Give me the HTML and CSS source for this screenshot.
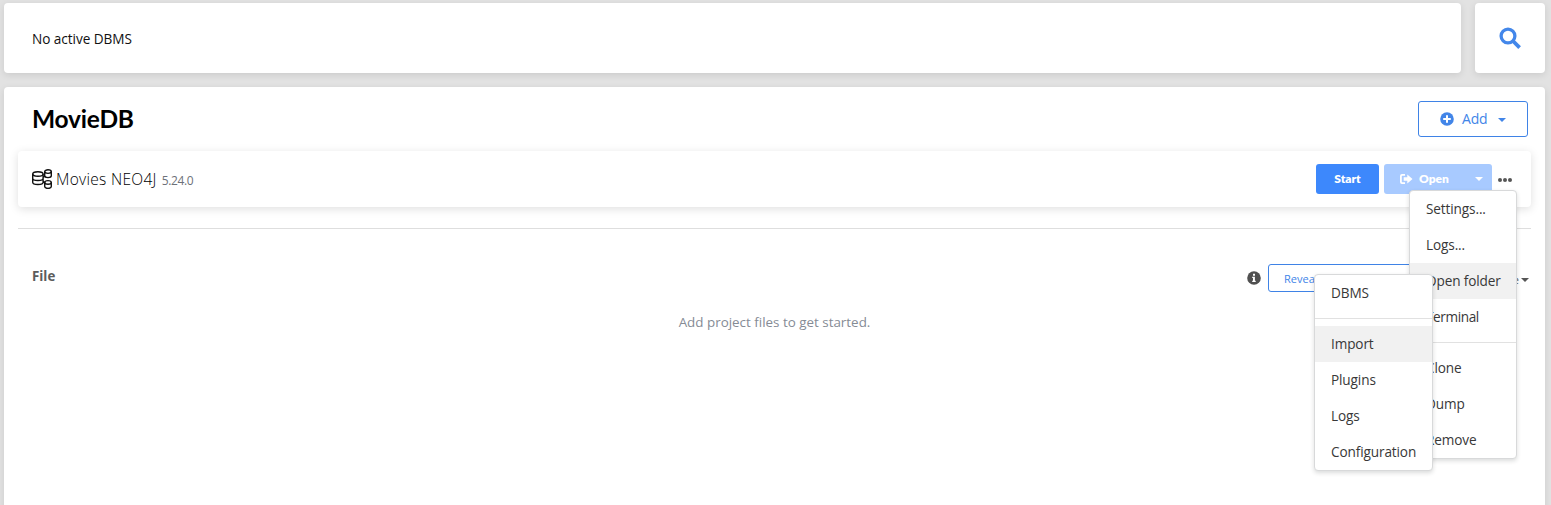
FILE: index.html
```html
<!DOCTYPE html>
<html lang="en">
<head>
<meta charset="utf-8">
<title>MovieDB</title>
<link rel="stylesheet" href="styles.css">
</head>
<body>
<div class="app">
  <header class="topbar">
    <div class="card status"><span class="status-text">No active DBMS</span></div>
    <button class="card search" aria-label="Search">
      <svg width="22" height="22" viewBox="0 0 22 22" fill="none" stroke="#4387ea"><circle cx="9" cy="9" r="6.9" stroke-width="3.3"/><path d="M14 14l6.6 6.6" stroke-width="3.8"/></svg>
    </button>
  </header>
  <main class="card project">
    <div class="project-head">
      <h1 class="title">MovieDB</h1>
      <button class="add">
        <svg width="14" height="14" viewBox="0 0 14 14"><circle cx="7" cy="7" r="6.8" fill="#4285e8"/><path d="M7 3.2v7.6M3.2 7h7.6" stroke="#fff" stroke-width="2"/></svg>
        <span class="add-label">Add</span><i class="caret"></i>
      </button>
    </div>
    <section class="dbms">
      <svg class="db-icon" width="20" height="20" viewBox="0 0 20 20" fill="none" stroke="#111" stroke-width="1.4"><ellipse cx="5.9" cy="5" rx="5.2" ry="2.3"/><path d="M.7 5v8.2c0 3 10.4 3 10.4 0V5M.7 9.2c0 3 10.4 3 10.4 0M11.1 8.5l2-1.5M11.1 12.2l2 1.5"/><ellipse cx="16" cy="2.6" rx="3.3" ry="1.8"/><path d="M12.7 2.6v4.2c0 2.4 6.6 2.4 6.6 0V2.6"/><ellipse cx="16" cy="13.4" rx="3.3" ry="1.8"/><path d="M12.7 13.4v4.2c0 2.4 6.6 2.4 6.6 0v-4.2"/></svg>
      <span class="db-name">Movies NEO4J</span><span class="version">5.24.0</span>
      <button class="start"><span class="start-label">Start</span></button>
      <button class="open">
        <svg width="13" height="10" viewBox="0 0 13 10"><path d="M5 0H2Q0 0 0 2v6q0 2 2 2h3V8.3H2.4Q1.8 8.3 1.8 7.7V2.3q0-.6.6-.6H5z" fill="#fff"/><path d="M3.7 3.3h3.6V.6L12.5 5 7.3 9.4V6.7H3.7z" fill="#fff"/></svg>
        <span class="open-label">Open</span><i class="caret"></i>
      </button>
      <span class="dots"><i></i><i></i><i></i></span>
    </section>
    <section class="files">
      <div class="files-head">
        <h2 class="file-title">File</h2>
        <svg class="info" width="14" height="14" viewBox="0 0 14 14"><circle cx="7" cy="7" r="6.8" fill="#505050"/><path d="M6 2.7h2v2H6zM5.2 5.7h2.7v4h.8V11H5.2V9.7H6V7h-.8z" fill="#fff"/></svg>
        <button class="reveal"><span class="reveal-label">Reveal files</span></button>
        <span class="sort"><span class="sort-label">Name</span><i class="caret"></i></span>
      </div>
      <p class="empty"><span class="empty-label">Add project files to get started.</span></p>
    </section>
  </main>
</div>
<nav class="menu actions">
  <a class="item"><span>Settings...</span></a>
  <a class="item"><span>Logs...</span></a>
  <a class="item active"><span>Open folder</span></a>
  <a class="item"><span class="tight">Terminal</span></a>
  <hr class="divider">
  <a class="item"><span>Clone</span></a>
  <a class="item"><span>Dump</span></a>
  <a class="item"><span>Remove</span></a>
</nav>
<nav class="menu folders">
  <a class="item"><span>DBMS</span></a>
  <hr class="divider">
  <a class="item active"><span>Import</span></a>
  <a class="item"><span>Plugins</span></a>
  <a class="item"><span>Logs</span></a>
  <a class="item"><span>Configuration</span></a>
</nav>
</body>
</html>
```
FILE: styles.css
```css
* { box-sizing: border-box; }
body { margin: 0; height: 505px; overflow: hidden; background: #e2e2e2; font-family: "Open Sans", "Noto Sans", sans-serif; font-size: 14px; color: #000; }
button { font: inherit; padding: 0; border: 0; cursor: pointer; }
span { white-space: nowrap; }
.app { display: flex; flex-direction: column; gap: 14px; height: 505px; padding: 3px 6px 0 4px; }
.card { background: #fff; border-radius: 4px; box-shadow: 0 2px 7px rgba(0,0,0,.1); }
.topbar { display: flex; gap: 14px; height: 70px; flex: none; }
.status { flex: 1; display: flex; align-items: center; padding: 1px 28px 0; }
.status-text { font-size: 13.6px; letter-spacing: -.05px; color: #111; }
.search { width: 70px; display: flex; align-items: center; justify-content: center; }
.project { flex: none; height: 440px; padding: 14px; }
.project-head { display: flex; justify-content: space-between; height: 36px; padding: 0 3px 0 14px; }
.title { margin: 0; font: 700 24.5px/36px Lato, sans-serif; letter-spacing: -.2px; }
.add { display: flex; align-items: center; width: 110px; height: 36px; padding-left: 21px; border: 1px solid #3f83e6; border-radius: 3px; background: #fff; color: #4285e8; }
.add-label { margin: -1px 0 0 8px; letter-spacing: -.2px; }
.caret { width: 0; height: 0; border: 4px solid transparent; border-top-color: currentColor; border-bottom: 0; }
.add .caret { margin: 2px 0 0 11px; }
.dbms { display: flex; align-items: center; height: 56px; margin-top: 14px; padding: 0 19px 0 14px; border-radius: 4px; box-shadow: 0 2px 10px rgba(0,0,0,.13); }
.db-name { margin-left: 4px; font-size: 15.5px; font-weight: 340; letter-spacing: .3px; }
.version { margin: 3px 0 0 5px; font-size: 12px; letter-spacing: -.35px; color: #6d7179; }
.start { width: 63px; height: 30px; margin-left: auto; padding-bottom: 2px; border-radius: 3px; background: #3d88fc; color: #fff; font: 800 12px Lato, sans-serif; }
.open { display: flex; align-items: center; width: 108px; height: 30px; margin-left: 5px; padding-left: 16px; border-radius: 3px; background: #a8caff; color: #fff; font: 800 12px Lato, sans-serif; }
.open-label { margin: -2px 0 0 6px; }
.open .caret { margin-left: 26px; }
.dots { display: flex; gap: 1px; margin: 2px 0 0 6px; }
.dots i { width: 4px; height: 4px; border-radius: 50%; background: #555; }
.files { margin-top: 21px; border-top: 1px solid #dedede; }
.files-head { display: flex; align-items: center; height: 28px; margin-top: 35px; padding-left: 14px; }
.file-title { margin: 0 auto 5px 0; font-size: 13.3px; line-height: 18px; color: #5c5c5c; }
.reveal { width: 180px; height: 28px; margin-left: 7px; padding-left: 15px; text-align: left; border: 1px solid #3f83e6; border-radius: 3px; background: #fff; color: #4285e8; font-size: 11px; }
.sort { display: flex; align-items: center; justify-content: flex-end; width: 81px; margin: 3px 2px 0 0; font-size: 11px; color: #555; }
.sort .caret { margin-left: 2px; }
.empty { margin: 20px 0 0; text-align: center; font-size: 13.4px; line-height: 20px; color: #858b95; }
.menu { position: absolute; background: #fff; border: 1px solid #d8d9da; border-radius: 4px; box-shadow: 0 2px 4px rgba(34,36,38,.16); overflow: hidden; }
.actions { left: 1409px; top: 190px; width: 108px; }
.folders { left: 1314px; top: 274px; width: 119px; }
.item { display: flex; align-items: center; height: 36px; padding: 0 16px 1px; font-size: 13.6px; letter-spacing: -.12px; color: #383838; }
.active { background: #f1f1f1; }
.tight { letter-spacing: -.4px; }
.divider { height: 1px; margin: 7px 0; border: 0; background: #e1e1e1; }
```
